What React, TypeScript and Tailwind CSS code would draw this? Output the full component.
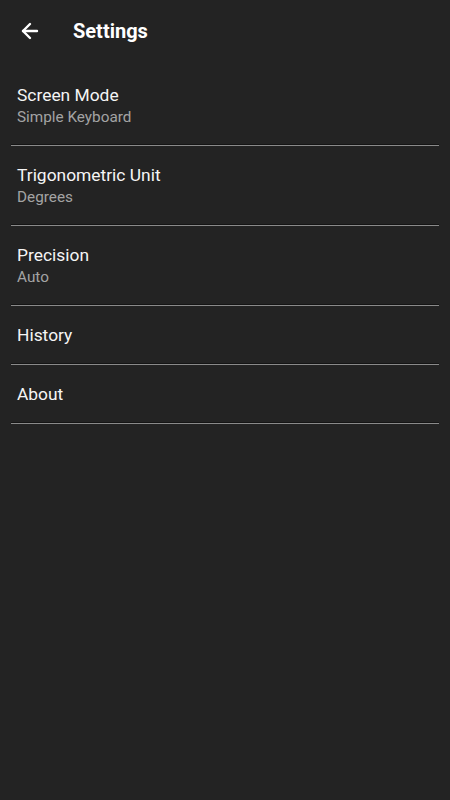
import { ArrowLeft } from 'lucide-react'

type Item = { title: string; subtitle?: string }

const items: Item[] = [
  { title: 'Screen Mode', subtitle: 'Simple Keyboard' },
  { title: 'Trigonometric Unit', subtitle: 'Degrees' },
  { title: 'Precision', subtitle: 'Auto' },
  { title: 'History' },
  { title: 'About' },
]

function Divider() {
  return (
    <div>
      <div className="h-px bg-[#141414]" />
      <div className="h-px bg-[#8a8a8a]" />
    </div>
  )
}

export default function App() {
  return (
    <div
      className="min-h-[800px] w-full bg-[#232323] text-white"
      style={{ fontFamily: 'Roboto, "Noto Sans", sans-serif' }}
    >
      {/* Toolbar */}
      <div className="flex h-[66px] items-center pb-[5px]">
        <div className="ml-[18px] flex h-6 w-6 items-center justify-center">
          <ArrowLeft size={24} strokeWidth={2.4} />
        </div>
        <h1 className="ml-[31px] text-[20px] font-bold leading-none">Settings</h1>
      </div>

      {/* Preference list */}
      <div className="px-[11px]">
        {items.map((item) => (
          <div key={item.title}>
            <div
              className={
                item.subtitle
                  ? 'flex h-[78px] flex-col justify-center px-[6px] pt-[2px]'
                  : 'flex h-[57px] flex-col justify-center px-[6px] pt-[1px]'
              }
            >
              <div className="text-[17.4px] leading-[22px] text-[#f5f5f5]">{item.title}</div>
              {item.subtitle && (
                <div className="text-[15.3px] leading-[22px] text-[#a3a3a3]">{item.subtitle}</div>
              )}
            </div>
            <Divider />
          </div>
        ))}
      </div>
    </div>
  )
}
